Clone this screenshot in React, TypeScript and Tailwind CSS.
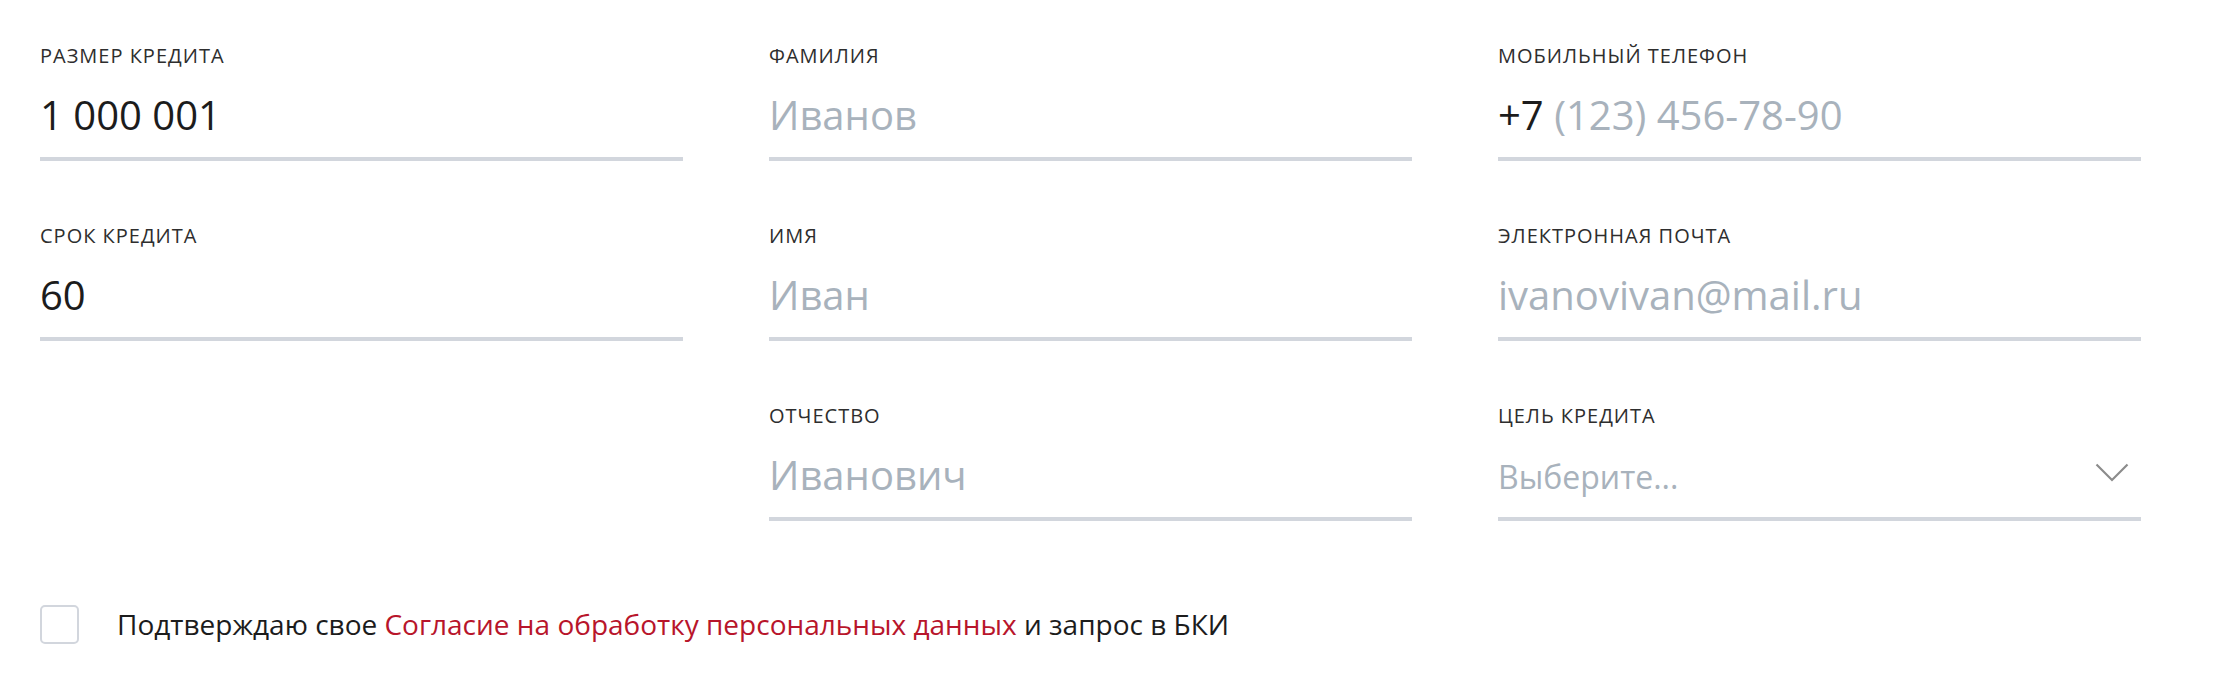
const font = { fontFamily: "'Open Sans', 'Noto Sans', sans-serif" }

type FieldProps = {
  label: string
  value?: string
  prefix?: string
  placeholder?: string
}

function Field({ label, value, prefix, placeholder }: FieldProps) {
  return (
    <div className="flex flex-col">
      <div className="text-[20px] leading-[28px] text-[#2e2e2e] tracking-[1px]">{label}</div>
      <div className="mt-[17px] pb-[15px] border-b-4 border-[#d2d6dd] text-[40px] leading-[55px] whitespace-nowrap">
        {prefix && <span className="text-[#1c1c1c]">{prefix} </span>}
        {value ? (
          <span className="text-[#1c1c1c]">{value}</span>
        ) : (
          <span className="text-[#a8b2bc]">{placeholder}</span>
        )}
      </div>
    </div>
  )
}

function SelectField({ label, placeholder }: { label: string; placeholder: string }) {
  return (
    <div className="flex flex-col">
      <div className="text-[20px] leading-[28px] text-[#2e2e2e] tracking-[1px]">{label}</div>
      <div className="mt-[17px] pb-[15px] border-b-4 border-[#d2d6dd] h-[74px] flex items-center justify-between pr-[12px]">
        <span className="text-[32px] text-[#a8b2bc] pt-[4px]">{placeholder}</span>
        <svg width="34" height="19" viewBox="0 0 34 19" fill="none" className="-mt-[4px]">
          <path d="M1.5 1.5 L17 17 L32.5 1.5" stroke="#8c8c8c" strokeWidth="2.2" />
        </svg>
      </div>
    </div>
  )
}

export default function App() {
  return (
    <div className="bg-white w-[2218px] h-[684px]" style={font}>
      <div className="pl-[40px] pt-[42px]">
        <div className="grid grid-cols-[643px_643px_643px] gap-x-[86px] gap-y-[61px]">
          <Field label="РАЗМЕР КРЕДИТА" value="1 000 001" />
          <Field label="ФАМИЛИЯ" placeholder="Иванов" />
          <Field label="МОБИЛЬНЫЙ ТЕЛЕФОН" prefix="+7" placeholder="(123) 456-78-90" />

          <Field label="СРОК КРЕДИТА" value="60" />
          <Field label="ИМЯ" placeholder="Иван" />
          <Field label="ЭЛЕКТРОННАЯ ПОЧТА" placeholder="ivanovivan@mail.ru" />

          <div />
          <Field label="ОТЧЕСТВО" placeholder="Иванович" />
          <SelectField label="ЦЕЛЬ КРЕДИТА" placeholder="Выберите..." />
        </div>

        {/* Consent */}
        <label className="mt-[82px] flex items-center gap-[38px]">
          <span className="w-[39px] h-[39px] rounded-[5px] border-2 border-[#d2d6dd] bg-white shrink-0" />
          <span className="text-[28px] text-[#1c1c1c] whitespace-nowrap">
            Подтверждаю свое{" "}
            <a href="#" className="text-[#b8152b]">
              Согласие на обработку персональных данных
            </a>{" "}
            и запрос в БКИ
          </span>
        </label>
      </div>
    </div>
  )
}
